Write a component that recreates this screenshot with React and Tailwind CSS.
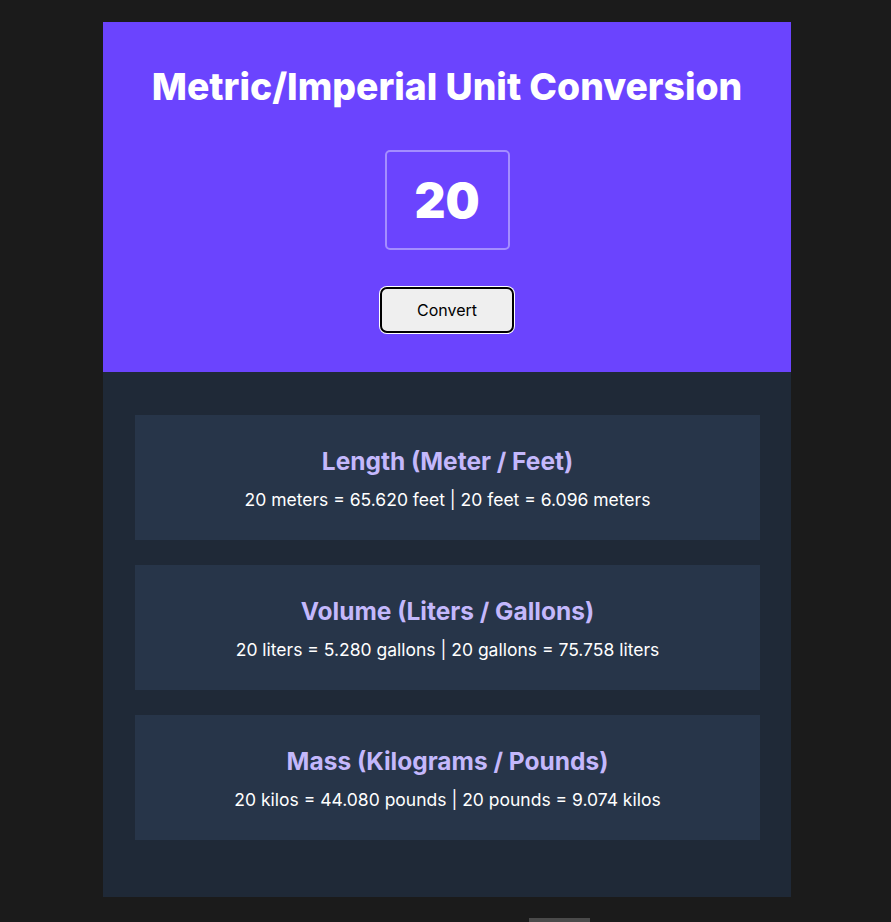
import React, { useState } from 'react';

const results = [
  {
    title: 'Length (Meter / Feet)',
    text: '20 meters = 65.620 feet | 20 feet = 6.096 meters',
  },
  {
    title: 'Volume (Liters / Gallons)',
    text: '20 liters = 5.280 gallons | 20 gallons = 75.758 liters',
  },
  {
    title: 'Mass (Kilograms / Pounds)',
    text: '20 kilos = 44.080 pounds | 20 pounds = 9.074 kilos',
  },
];

const App = () => {
  const [value, setValue] = useState('20');

  return (
    <div className="min-h-[922px] bg-[#1b1b1b] pt-[22px] font-['Inter',sans-serif]">
      <div className="w-[688px] ml-[103px]">
        {/* Header */}
        <div className="h-[350px] bg-[#6b44fe] flex flex-col items-center pt-[42px]">
          <h1 className="text-[37.3px] font-extrabold text-white leading-[46px]">
            Metric/Imperial Unit Conversion
          </h1>
          <input
            value={value}
            onChange={(e) => setValue(e.target.value)}
            className="mt-[40px] w-[125px] h-[100px] rounded-[5px] border-2 border-[#a48dff] bg-transparent text-center text-white text-[48px] font-black outline-none"
          />
          <button className="mt-[37px] w-[134px] h-[46px] rounded-[7px] bg-[#efefef] border-2 border-black ring-1 ring-white text-black text-[16px]">
            Convert
          </button>
        </div>

        {/* Results */}
        <div className="bg-[#1f2937] h-[525px] pt-[43px] pl-[32px] pr-[31px] flex flex-col gap-[25px]">
          {results.map((r, i) => (
            <div key={i} className="h-[125px] bg-[#273549] flex flex-col items-center pt-[31px]">
              <h2 className="text-[24.5px] font-bold text-[#c4b8fc] leading-[30px]">{r.title}</h2>
              <p className="mt-[12px] text-[17.5px] text-white leading-[24px]">{r.text}</p>
            </div>
          ))}
        </div>
      </div>
      <div className="ml-[529px] mt-[21px] w-[61px] h-[4px] bg-[#4a4a4a]"></div>
    </div>
  );
};

export default App;
